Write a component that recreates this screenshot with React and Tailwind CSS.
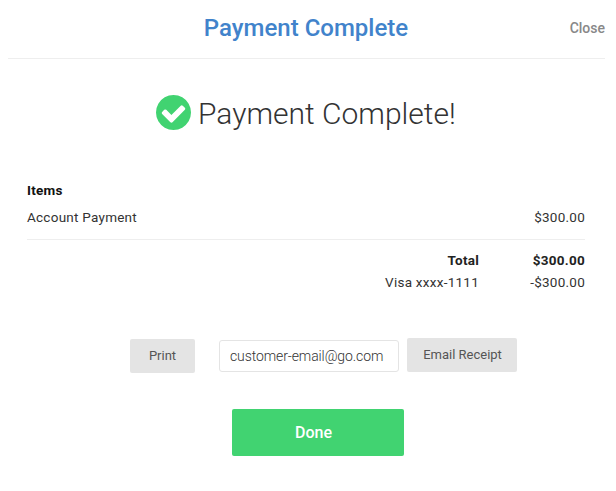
import React from "react"

const items = [{ name: "Account Payment", amount: "$300.00" }]

function CheckCircle() {
  return (
    <svg viewBox="0 128 1536 1536" className="w-[35px] h-[35px] mb-px shrink-0 fill-[#41d371]">
      <path d="M1284 734q0-28-18-46l-91-90q-19-19-45-19t-45 19l-408 407-226-226q-19-19-45-19t-45 19l-91 90q-18 18-18 46 0 27 18 45l362 362q19 19 45 19 27 0 46-19l543-543q18-18 18-45zm252 162q0 209-103 385.5t-279.500 279.500-385.500 103-385.500-103-279.500-279.500-103-385.500 103-385.500 279.500-279.500 385.500-103 385.500 103 279.500 279.500 103 385.500z" />
    </svg>
  )
}

function Header() {
  return (
    <header className="ml-2 mr-[11px] h-[59px] grid grid-cols-[1fr_auto_1fr] items-center border-b border-[#eeeeee] pb-[3px]">
      <h1 className="col-start-2 -ml-px text-2xl font-medium text-[#4183cb]">Payment Complete</h1>
      <button className="justify-self-end text-sm font-medium text-[#888888]">Close</button>
    </header>
  )
}

function Receipt() {
  return (
    <section className="ml-[27px] mr-[31px] mt-[45px] text-[13.5px] tracking-[0.25px] text-[#333333]">
      <h3 className="h-[27px] leading-[25px] font-bold text-[#111111]">Items</h3>
      {items.map((item) => (
        <div key={item.name} className="flex justify-between h-[35px] leading-[25px] border-b border-[#eeeeee]">
          <span>{item.name}</span>
          <span>{item.amount}</span>
        </div>
      ))}
      <div className="grid grid-cols-[1fr_106px] text-right leading-[22px] pt-[9px]">
        <span className="font-bold text-[#222222]">Total</span>
        <span className="font-bold text-[#222222]">$300.00</span>
        <span>Visa xxxx-1111</span>
        <span>-$300.00</span>
      </div>
    </section>
  )
}

export default function App() {
  return (
    <div className="w-[616px] h-[491px] bg-white overflow-hidden font-['Roboto',sans-serif]">
      <Header />
      <div className="flex items-center ml-[156px] mt-[34px] h-10">
        <CheckCircle />
        <h2 className="ml-[7px] text-[30px] font-light whitespace-nowrap text-[#333333]">Payment Complete!</h2>
      </div>
      <Receipt />
      <div className="flex items-start ml-[130px] mt-[45px]">
        <button className="w-[65px] h-[34px] mt-px rounded-xs bg-[#e4e4e4] text-[13px] text-[#555555]">Print</button>
        <input
          className="ml-6 w-[180px] h-[32px] mt-[2px] px-2.5 rounded-[3px] border border-[#e4e4e4] text-sm tracking-[-0.1px] font-light text-[#333333]"
          defaultValue="customer-email@go.com"
        />
        <button className="ml-2 w-[110px] h-[34px] pl-px rounded-xs bg-[#e4e4e4] text-[13px] text-[#555555]">Email Receipt</button>
      </div>
      <button className="block ml-[232px] mt-9 w-[172px] h-[47px] rounded-xs bg-[#41d371] text-base font-medium text-white pr-[9px]">
        Done
      </button>
    </div>
  )
}
